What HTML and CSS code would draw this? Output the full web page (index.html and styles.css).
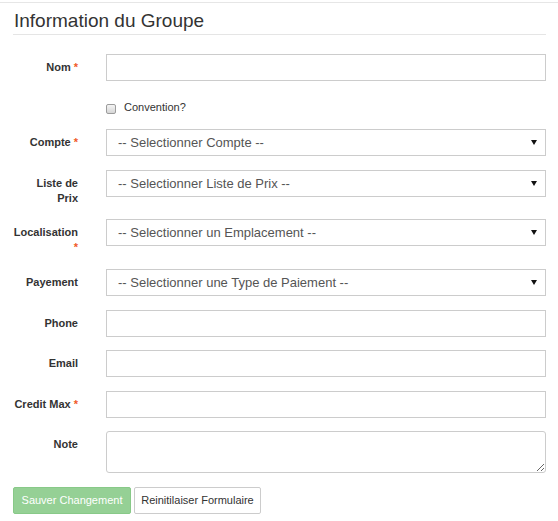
FILE: index.html
```html
<!DOCTYPE html>
<html lang="fr">
<head>
<meta charset="utf-8">
<title>Information du Groupe</title>
<link rel="stylesheet" href="styles.css">
</head>
<body>
<div class="page">
  <div class="panel">
    <h3 class="title">Information du Groupe</h3>
    <form class="form">
      <div class="row">
        <label class="lbl">Nom <span class="req">*</span></label>
        <div class="field"><input class="ctl" type="text"></div>
      </div>
      <div class="row row-check">
        <div class="lbl"></div>
        <div class="field check">
          <span class="box"></span>
          <span class="check-text">Convention?</span>
        </div>
      </div>
      <div class="row">
        <label class="lbl">Compte <span class="req">*</span></label>
        <div class="field sel">
          <select class="ctl"><option>-- Selectionner Compte --</option></select>
          <svg class="arrow" width="6" height="5" viewBox="0 0 6 5"><path d="M0 0H6L3 5Z" fill="#111"/></svg>
        </div>
      </div>
      <div class="row">
        <label class="lbl">Liste de Prix</label>
        <div class="field sel">
          <select class="ctl"><option>-- Selectionner Liste de Prix --</option></select>
          <svg class="arrow" width="6" height="5" viewBox="0 0 6 5"><path d="M0 0H6L3 5Z" fill="#111"/></svg>
        </div>
      </div>
      <div class="row">
        <label class="lbl">Localisation <span class="req">*</span></label>
        <div class="field sel">
          <select class="ctl"><option>-- Selectionner un Emplacement --</option></select>
          <svg class="arrow" width="6" height="5" viewBox="0 0 6 5"><path d="M0 0H6L3 5Z" fill="#111"/></svg>
        </div>
      </div>
      <div class="row">
        <label class="lbl">Payement</label>
        <div class="field sel">
          <select class="ctl"><option>-- Selectionner une Type de Paiement --</option></select>
          <svg class="arrow" width="6" height="5" viewBox="0 0 6 5"><path d="M0 0H6L3 5Z" fill="#111"/></svg>
        </div>
      </div>
      <div class="row">
        <label class="lbl">Phone</label>
        <div class="field"><input class="ctl" type="text"></div>
      </div>
      <div class="row">
        <label class="lbl">Email</label>
        <div class="field"><input class="ctl" type="text"></div>
      </div>
      <div class="row">
        <label class="lbl">Credit Max <span class="req">*</span></label>
        <div class="field"><input class="ctl" type="text"></div>
      </div>
      <div class="row">
        <label class="lbl">Note</label>
        <div class="field"><textarea class="ctl area"></textarea></div>
      </div>
      <div class="actions">
        <button type="button" class="btn btn-save">Sauver Changement</button>
        <button type="button" class="btn btn-reset">Reinitilaiser Formulaire</button>
      </div>
    </form>
  </div>
</div>
</body>
</html>
```

FILE: styles.css
```css
html, body {
  margin: 0;
  padding: 0;
  background: #fff;
}

body {
  font-family: "Liberation Sans", Arial, sans-serif;
  color: #333;
}

.page {
  padding-top: 2px;
}

.panel {
  border-top: 1px solid #e6e6e6;
  padding: 0 12px 0 13px;
}

.title {
  margin: 0;
  padding: 7px 0 3px 1px;
  font-size: 19px;
  line-height: 21px;
  font-weight: normal;
  color: #333;
  border-bottom: 1px solid #e5e5e5;
}

.form {
  padding-top: 19px;
}

.row {
  display: grid;
  grid-template-columns: 65px 1fr;
  column-gap: 28px;
  margin-bottom: 13.6px;
}

.lbl {
  padding-top: 6px;
  font-size: 11px;
  line-height: 15px;
  font-weight: bold;
  text-align: right;
  color: #333;
}

.req {
  color: #f05a28;
}

.field {
  position: relative;
}

.ctl {
  display: block;
  box-sizing: border-box;
  width: 100%;
  height: 27px;
  margin: 0;
  padding: 0 11px;
  border: 1px solid #ccc;
  border-radius: 0;
  background: #fff;
  font-family: "Liberation Sans", Arial, sans-serif;
  font-size: 13px;
  color: #555;
  outline: none;
}

select.ctl {
  -webkit-appearance: none;
  appearance: none;
}

.arrow {
  position: absolute;
  right: 9px;
  top: 11px;
}

.row-check .lbl {
  padding-top: 0;
}

.check {
  display: flex;
  align-items: flex-start;
  height: 21px;
}

.box {
  width: 8px;
  height: 8px;
  margin-top: 9.5px;
  border: 1px solid #9c9c9c;
  border-radius: 2px;
  background: linear-gradient(#f4f4f4, #d6d6d6);
}

.check-text {
  margin-left: 8px;
  margin-top: 6.5px;
  font-size: 11px;
  line-height: 13px;
  color: #333;
}

.area {
  height: 42px;
  border-radius: 3px;
  resize: vertical;
  padding: 6px 11px;
}

.actions {
  display: flex;
  gap: 3px;
}

.btn {
  box-sizing: border-box;
  height: 27px;
  padding: 0;
  font-family: "Liberation Sans", Arial, sans-serif;
  font-size: 11px;
  white-space: nowrap;
  text-align: center;
  border-radius: 2px;
  cursor: pointer;
}

.btn-save {
  width: 118px;
  background: #95d095;
  border: 1px solid #88c988;
  color: #fff;
}

.btn-reset {
  width: 127px;
  background: #fff;
  border: 1px solid #ccc;
  color: #333;
}
```
